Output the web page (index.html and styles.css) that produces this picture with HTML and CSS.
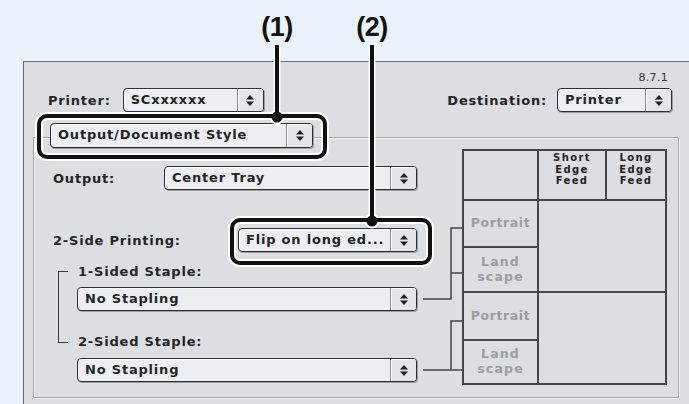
FILE: index.html
```html
<!DOCTYPE html>
<html>
<head>
<meta charset="utf-8">
<link rel="stylesheet" href="styles.css">
</head>
<body>
<div class="page">
  <div class="dialog">
    <div class="topbar">
      <div class="tb-left">
        <span class="lbl lbl-printer">Printer:</span>
        <div class="popup w-sc"><span class="ptext">SCxxxxxx</span><span class="parrow"><svg width="8" height="11" viewBox="0 0 8 11"><polygon points="4,0 8,4.5 0,4.5"/><polygon points="0,6.5 8,6.5 4,11"/></svg></span></div>
      </div>
      <div class="tb-right">
        <div class="ver">8.7.1</div>
        <div class="tb-row">
          <span class="lbl lbl-dest">Destination:</span>
          <div class="popup w-dest"><span class="ptext">Printer</span><span class="parrow"><svg width="8" height="11" viewBox="0 0 8 11"><polygon points="4,0 8,4.5 0,4.5"/><polygon points="0,6.5 8,6.5 4,11"/></svg></span></div>
        </div>
      </div>
    </div>

    <div class="panel">
      <div class="form">
        <div class="popup w-legend"><span class="ptext">Output/Document Style</span><span class="parrow"><svg width="8" height="11" viewBox="0 0 8 11"><polygon points="4,0 8,4.5 0,4.5"/><polygon points="0,6.5 8,6.5 4,11"/></svg></span></div>

        <div class="frow row-output">
          <span class="lbl flabel lbl-output">Output:</span>
          <div class="popup w-tray"><span class="ptext">Center Tray</span><span class="parrow"><svg width="8" height="11" viewBox="0 0 8 11"><polygon points="4,0 8,4.5 0,4.5"/><polygon points="0,6.5 8,6.5 4,11"/></svg></span></div>
        </div>

        <div class="frow row-duplex">
          <span class="lbl flabel lbl-duplex">2-Side Printing:</span>
          <div class="popup w-flip"><span class="ptext">Flip on long ed...</span><span class="parrow"><svg width="8" height="11" viewBox="0 0 8 11"><polygon points="4,0 8,4.5 0,4.5"/><polygon points="0,6.5 8,6.5 4,11"/></svg></span></div>
        </div>

        <div class="staples">
          <div class="bracket"></div>
          <div class="staple-list">
            <div class="lbl slabel slabel-1">1-Sided Staple:</div>
            <div class="popup w-staple staple-1"><span class="ptext">No Stapling</span><span class="parrow"><svg width="8" height="11" viewBox="0 0 8 11"><polygon points="4,0 8,4.5 0,4.5"/><polygon points="0,6.5 8,6.5 4,11"/></svg></span></div>
            <div class="lbl slabel slabel-2">2-Sided Staple:</div>
            <div class="popup w-staple staple-2"><span class="ptext">No Stapling</span><span class="parrow"><svg width="8" height="11" viewBox="0 0 8 11"><polygon points="4,0 8,4.5 0,4.5"/><polygon points="0,6.5 8,6.5 4,11"/></svg></span></div>
          </div>
        </div>
      </div>

      <svg class="conn" width="45" height="259" viewBox="0 0 45 259">
        <g stroke="#444" stroke-width="1.5" fill="none">
          <polyline points="6,161 34,161 34,90 45,90"/>
          <line x1="34" y1="135" x2="45" y2="135"/>
          <polyline points="45,183 34,183 34,232"/>
          <line x1="6" y1="232" x2="45" y2="232"/>
        </g>
      </svg>

      <div class="feedtable">
        <div class="cell c-blank"></div>
        <div class="cell c-head"><span>Short</span><span>Edge</span><span>Feed</span></div>
        <div class="cell c-head"><span>Long</span><span>Edge</span><span>Feed</span></div>
        <div class="cell c-orient">Portrait</div>
        <div class="cell c-big c-big1"></div>
        <div class="cell c-orient c-land"><span>Land</span><span>scape</span></div>
        <div class="cell c-orient">Portrait</div>
        <div class="cell c-big c-big2"></div>
        <div class="cell c-orient c-land"><span>Land</span><span>scape</span></div>
      </div>
    </div>
  </div>

  <div class="callouts">
    <div class="cnum cnum-1">(1)</div>
    <div class="cnum cnum-2">(2)</div>
    <svg class="callout-svg" width="689" height="404" viewBox="0 0 689 404">
      <g fill="none" stroke="#ffffff" stroke-width="8">
        <rect x="39" y="116" width="286" height="41" rx="8"/>
        <rect x="232" y="220" width="198" height="43" rx="8"/>
      </g>
      <g stroke="#ffffff" stroke-width="7">
        <line x1="277" y1="45" x2="277" y2="116"/>
        <line x1="372" y1="45" x2="372" y2="220"/>
      </g>
      <g fill="#ffffff">
        <circle cx="277" cy="117" r="7.5"/>
        <circle cx="372" cy="221" r="7.5"/>
      </g>
      <g fill="none" stroke="#111" stroke-width="4">
        <rect x="39" y="116" width="286" height="41" rx="8"/>
        <rect x="232" y="220" width="198" height="43" rx="8"/>
      </g>
      <g stroke="#111" stroke-width="4">
        <line x1="277" y1="45" x2="277" y2="116"/>
        <line x1="372" y1="45" x2="372" y2="220"/>
      </g>
      <g fill="#111">
        <circle cx="277" cy="117" r="5.5"/>
        <circle cx="372" cy="221" r="5.5"/>
      </g>
    </svg>
  </div>
</div>
</body>
</html>
```

FILE: styles.css
```css
html, body {
  margin: 0;
  padding: 0;
}
body {
  background: #eaf3fc;
  font-family: "DejaVu Sans", "Liberation Sans", sans-serif;
  color: #222;
}
.page {
  position: relative;
  width: 689px;
  height: 404px;
  overflow: hidden;
}
.dialog {
  margin: 61px 0 0 23px;
  width: 680px;
  height: 360px;
  box-sizing: border-box;
  border: 1px solid #6a6c70;
  background: #dcdee2;
}

/* labels */
.lbl {
  font-weight: bold;
  font-size: 13px;
  letter-spacing: 0.8px;
  white-space: nowrap;
  color: #232425;
}

/* popup menu */
.popup {
  display: flex;
  height: 24px;
  box-sizing: border-box;
  border: 1px solid #2e2f31;
  border-radius: 4px;
  background: #eceef1;
  box-shadow: 1px 1px 0 #9c9ea3, inset 1px 1px 0 #fafbfc;
  flex-shrink: 0;
}
.ptext {
  flex: 1;
  padding-left: 7px;
  font-weight: bold;
  font-size: 13px;
  letter-spacing: 0.8px;
  line-height: 22px;
  white-space: nowrap;
  overflow: hidden;
  color: #232425;
}
.parrow {
  width: 25px;
  border-left: 1px solid #8a8c90;
  background: #e4e6ea;
  box-shadow: inset 1px 1px 0 #ffffff;
  border-radius: 0 3px 3px 0;
  display: flex;
  align-items: center;
  justify-content: center;
}
.parrow svg { fill: #1e1f20; }

.w-sc { width: 141px; }
.w-dest { width: 115px; }
.w-legend { width: 263px; }
.w-tray { width: 253px; }
.w-flip { width: 179px; }
.w-staple { width: 340px; }

/* top bar */
.topbar {
  display: flex;
  justify-content: space-between;
  align-items: flex-end;
  padding: 9px 30px 0 24px;
}
.tb-left {
  display: flex;
  align-items: center;
  gap: 12px;
}
.tb-right {
  display: flex;
  flex-direction: column;
  align-items: flex-end;
}
.ver {
  font-size: 11px;
  line-height: 14px;
  padding-right: 4px;
  margin-bottom: 3px;
  color: #333;
  letter-spacing: 0.3px;
}
.tb-row {
  display: flex;
  align-items: center;
  gap: 10px;
}

/* group panel */
.panel {
  margin: 25px 0 0 9px;
  width: 646px;
  height: 261px;
  box-sizing: border-box;
  border: 1px solid #a2a4a8;
  box-shadow: inset 1px 1px 0 #f4f5f7, 1px 1px 0 #f4f5f7;
  display: flex;
  align-items: flex-start;
}
.form {
  width: 383px;
  box-sizing: border-box;
  padding-left: 16px;
  display: flex;
  flex-direction: column;
}
.w-legend {
  margin-top: -15px;
  height: 25px;
}
.frow {
  display: flex;
  align-items: center;
  height: 24px;
}
.flabel {
  padding-left: 3px;
}
.row-output {
  margin-top: 18px;
  justify-content: space-between;
}
.row-duplex {
  margin-top: 38px;
  justify-content: space-between;
}
.staples {
  display: flex;
  margin-top: 13px;
}
.bracket {
  width: 10px;
  height: 72px;
  margin: 6px 0 0 8px;
  border-left: 1.5px solid #3a3a3a;
  border-top: 1.5px solid #3a3a3a;
  border-bottom: 1.5px solid #3a3a3a;
  box-sizing: border-box;
  flex-shrink: 0;
}
.staple-list {
  display: flex;
  flex-direction: column;
  padding-left: 9px;
}
.slabel {
  height: 14px;
  line-height: 14px;
  padding-left: 1px;
}
.staple-1 { margin-top: 8px; }
.slabel-2 { margin-top: 24px; }
.staple-2 { margin-top: 9px; }

.conn {
  display: block;
  flex-shrink: 0;
}

/* feed table */
.feedtable {
  margin-top: 11px;
  display: grid;
  grid-template-columns: 73px 66px 58px;
  grid-template-rows: 48px 45px 43px 46px 42px;
  gap: 2px;
  padding: 2px;
  background: #45464a;
  flex-shrink: 0;
}
.cell {
  background: #dcdee2;
  display: flex;
  flex-direction: column;
  align-items: center;
  justify-content: center;
  text-align: center;
  font-weight: bold;
}
.c-head {
  font-size: 10px;
  line-height: 11.7px;
  letter-spacing: 1.4px;
  justify-content: flex-start;
  padding-top: 1px;
  box-sizing: border-box;
  color: #232425;
}
.c-head span {
  display: block;
}
.c-orient {
  font-size: 12.5px;
  letter-spacing: 0.6px;
  color: #9a9ca1;
  line-height: 14.6px;
}
.c-land {
  letter-spacing: 1.2px;
}
.c-land span {
  display: block;
}
.c-big1 { grid-column: 2 / 4; grid-row: 2 / 4; }
.c-big2 { grid-column: 2 / 4; grid-row: 4 / 6; }

/* callouts */
.callouts {
  position: absolute;
  left: 0;
  top: 0;
  width: 689px;
  height: 404px;
  pointer-events: none;
}
.callout-svg {
  position: absolute;
  left: 0;
  top: 0;
}
.cnum {
  position: absolute;
  top: 11px;
  width: 50px;
  text-align: center;
  font-family: "Liberation Sans", Arial, sans-serif;
  font-weight: bold;
  font-size: 27px;
  line-height: 32px;
  color: #111;
  letter-spacing: -0.5px;
}
.cnum-1 { left: 252px; }
.cnum-2 { left: 347px; }
```
